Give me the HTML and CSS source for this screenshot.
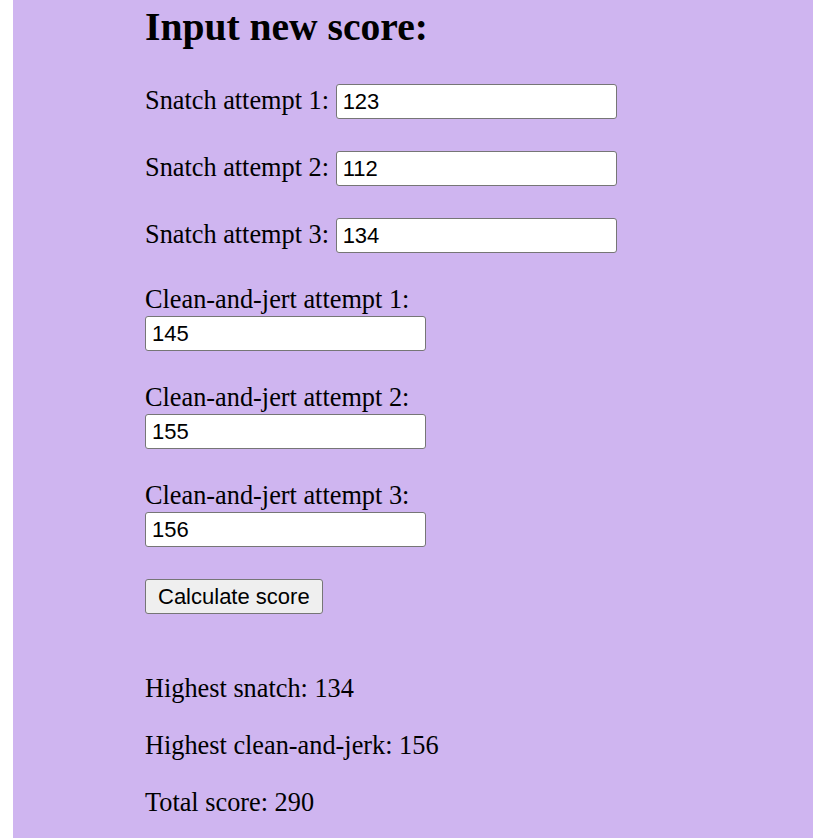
FILE: index.html
```html
<!DOCTYPE html>
<html lang="en">
<head>
<meta charset="utf-8">
<title>Input new score</title>
<link rel="stylesheet" href="styles.css">
</head>
<body>
<div class="page">
  <h1 class="title">Input new score:</h1>
  <div class="row">
    <label for="s1">Snatch attempt 1:</label> <input class="field" id="s1" type="text" value="123">
  </div>
  <div class="row">
    <label for="s2">Snatch attempt 2:</label> <input class="field" id="s2" type="text" value="112">
  </div>
  <div class="row">
    <label for="s3">Snatch attempt 3:</label> <input class="field" id="s3" type="text" value="134">
  </div>
  <div class="row">
    <label class="block-label" for="c1">Clean-and-jert attempt 1:</label>
    <input class="field field-block" id="c1" type="text" value="145">
  </div>
  <div class="row">
    <label class="block-label" for="c2">Clean-and-jert attempt 2:</label>
    <input class="field field-block" id="c2" type="text" value="155">
  </div>
  <div class="row">
    <label class="block-label" for="c3">Clean-and-jert attempt 3:</label>
    <input class="field field-block" id="c3" type="text" value="156">
  </div>
  <button class="calc" type="button">Calculate score</button>
  <div class="results">
    <p class="result">Highest snatch: 134</p>
    <p class="result">Highest clean-and-jerk: 156</p>
    <p class="result">Total score: 290</p>
  </div>
</div>
</body>
</html>
```

FILE: styles.css
```css
html {
  background: #ffffff;
}
body {
  margin: 0;
  padding: 0 1px 0 0;
  background: #ffffff;
  font-family: "Liberation Serif", "Times New Roman", serif;
  color: #000000;
}
.page {
  width: 800px;
  min-height: 100vh;
  margin: 0 auto;
  box-sizing: border-box;
  padding: 4px 0 1px 132px;
  background: #cfb5f0;
  font-size: 26.3px;
}
.title {
  margin: 0 0 34px;
  font-size: 39.6px;
  font-weight: bold;
  line-height: 46px;
}
.row {
  margin: 0 0 32px;
  line-height: 30px;
}
.block-label {
  display: block;
  height: 30px;
}
.field {
  box-sizing: border-box;
  width: 281px;
  height: 35px;
  padding: 0 6px;
  margin: 0;
  border: 1px solid #767676;
  border-radius: 3px;
  background: #ffffff;
  font-family: "Liberation Sans", Arial, sans-serif;
  font-size: 22px;
  color: #000000;
  vertical-align: baseline;
}
.field-block {
  display: block;
  margin-top: 1px;
}
.calc {
  display: block;
  box-sizing: border-box;
  height: 35px;
  padding: 0 12px;
  margin: 0;
  border: 1px solid #767676;
  border-radius: 3px;
  background: #efefef;
  font-family: "Liberation Sans", Arial, sans-serif;
  font-size: 22px;
  color: #000000;
}
.results {
  margin-top: 60px;
}
.result {
  margin: 0 0 27px;
  line-height: 30px;
}
```
